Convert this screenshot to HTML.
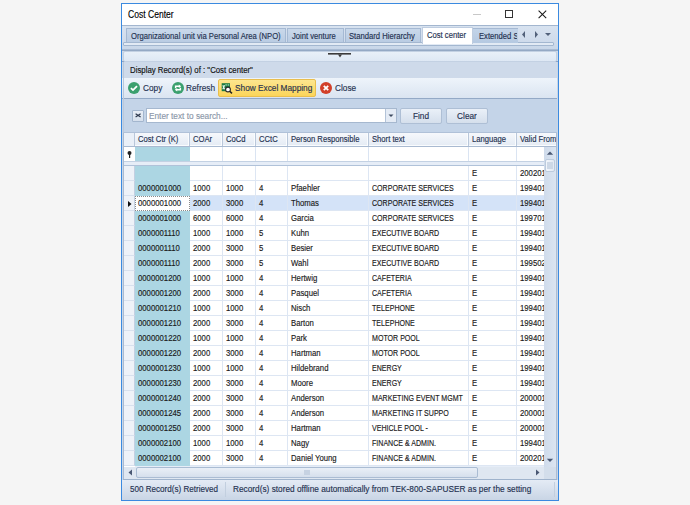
<!DOCTYPE html><html><head><meta charset="utf-8"><style>*{margin:0;padding:0;box-sizing:border-box}
html,body{width:690px;height:505px;overflow:hidden;background:#f5f5f5}
#root{position:relative;width:690px;height:505px;font-family:"Liberation Sans",sans-serif;color:#1e2a3c}
#root>div,#root>svg{position:absolute}
.s{display:inline-block;transform:scaleX(0.9);transform-origin:0 50%;white-space:nowrap;-webkit-text-stroke:0.15px currentColor}
.win{left:121px;top:3px;width:438px;height:498px;border:1px solid #3b8ae0;background:#cad8ea}
.title{left:122px;top:4px;width:436px;height:21px;background:#fff;font-size:10.2px;line-height:22px;padding-left:6px;color:#000}
.title .s{transform:scaleX(0.84)}
.tb-min{left:473px;top:14px;width:8px;height:1px;background:#c8c8c8}
.tb-max{left:505px;top:10px;width:8px;height:8px;border:1px solid #333}
.tb-close{left:537.5px;top:9.5px}
.tabstrip{left:122px;top:25px;width:436px;height:24px;background:linear-gradient(#d8e3f0,#d0dcec 60%,#c9d7e9);border-top:1px solid #a3b6cf}
.tab{top:28px;height:15px;background:linear-gradient(#c9d8ea,#baccE3);border:1px solid #a5b9d3;border-bottom:1px solid #a3b7d0}
.tabt{top:29px;height:15px;line-height:15px;font-size:8.5px;color:#1f3150;white-space:nowrap}
.tabsel{left:422px;top:27px;width:51px;height:17px;background:#fff;border:1px solid #bfcde0;border-bottom:none}
.tabt.sel{top:28px}
.tabext{left:473px;top:28px;width:45px;height:15px;background:linear-gradient(#c3d4e8,#b5c9e1);border-top:1px solid #a5b9d3}
.tabt.ext{width:38px;overflow:hidden}
.tabarrows{left:521px;top:30px}
.tabstripline{left:123px;top:42px;width:431px;height:4px;background:#e2eaf4;border:1px solid #a3b7d0;border-radius:1px}
.split{left:122px;top:49px;width:436px;height:13px;background:#cfdbea;border-top:1px solid #a9bbd3;border-bottom:1px solid #8ca3c2}
.split:before{content:"";position:absolute;left:0;top:0;right:0;height:1px;background:#94a9c5}
.split:after{content:"";position:absolute;left:1px;top:1px;right:1px;height:9px;background:linear-gradient(#e8f0f9,#dee8f4);border:1px solid #c3d1e3;border-radius:2px}
.splitico{left:328px;top:53px}
.lblband{left:122px;top:62px;width:436px;height:16px;background:#cedaea}
.lblband span{position:absolute;left:8px;top:0;line-height:16px;font-size:8.5px;color:#111;transform:scaleX(0.92)}
.toolbar{left:122px;top:78px;width:436px;height:21px;background:linear-gradient(#eef4fb,#dae4f1);border-bottom:1px solid #93a9c6}
.tbt{top:79px;height:18px;line-height:18px;font-size:9.8px;color:#1f3150;white-space:nowrap}
.yellowbtn{left:218px;top:79px;width:98px;height:18px;background:linear-gradient(#fde68f,#fbd55a);border:1px solid #e9be4e;border-radius:2px}
.content{left:122px;top:99px;width:436px;height:33px;background:#c4d4e8}
.xbtn{left:132px;top:110px;width:12px;height:12px;background:linear-gradient(#e8eef7,#d6e0ed);border:1px solid #a3b6ce;border-radius:1px}
.search{left:146px;top:108px;width:251px;height:15px;background:#fff;border:1px solid #a6b8cf}
.search span{position:absolute;left:2px;top:1px;line-height:13px;font-size:9.2px;color:#8a96a8}
.dd{position:absolute;left:238px;top:0;width:11px;height:13px;background:#e4ebf5;border-left:1px solid #b3c3d8}
.btn{top:108px;height:16px;background:linear-gradient(#eaf0f8,#d5dfec);border:1px solid #aebfd5;border-radius:2px;text-align:center;line-height:15px;font-size:9.2px;color:#1f3150}
.btn .s{transform-origin:50% 50%}
.grid{left:124px;top:133px;width:432px;height:346px;background:#fff;overflow:hidden}
.c .s{transform:scaleX(0.86)}
.c .s.u{transform:scaleX(0.785)}
.grid div{position:absolute}
.hdr{left:0;top:0;width:433px;height:14px;background:linear-gradient(#f6f8fc,#e4ebf4);border-bottom:1px solid #a9bad1}
.hdr .ind{left:0;top:0;width:11px;border-right:1px solid #b9c7da;background:#eaf0f8}
.hc{top:0;height:13px;border-right:1px solid #b9c7da;box-shadow:inset -1px -1px 0 #fafcfe;line-height:13px;font-size:8.5px;color:#1f3150;padding-left:3px;white-space:nowrap;overflow:hidden}
.frow{left:0;top:14px;width:433px;height:15px;background:#fff;border-bottom:1px solid #c3d1e3}
.fc{top:0;height:14px;border-right:1px solid #dae4f2}
.fc.blue{background:#acd6e3;border-right-color:#acd6e3}
.fsep{left:0;top:29px;width:433px;height:4px;background:#e6edf7;border-bottom:1px solid #b0c2d9}
.rows{left:0;top:33px;width:420px;height:300px;overflow:hidden}
.rowsend{left:11px;top:333px;width:409px;height:1px;background:#e6edf7}
.pborder{left:123px;top:62px;width:1px;height:70px;background:#b9c8db}
.row{left:0;width:433px;height:15px}
.rind{left:0;top:0;width:11px;height:15px;background:#eef2f8;border-right:1px solid #c3d0e2;border-bottom:1px solid #d8e1ee}
.c{top:0;height:15px;border-right:1px solid #dde6f3;border-bottom:1px solid #dde6f3;line-height:14px;font-size:9px;color:#1a1a1a;padding-left:3px;white-space:nowrap;overflow:hidden}
.c.blue{background:#acd6e3;border-bottom-color:#acd6e3;border-right-color:#acd6e3}
.row.sel .c{background:#d4e3f8}
.row.sel .c.focus{background:#fff;border:1px dotted #8a8a8a;padding-left:2px;line-height:13px}
.vsb{left:420px;top:14px;width:12px;height:320px;background:linear-gradient(90deg,#cfdbeb,#d6e1ef 60%,#dbe5f1)}
.vthumb{left:1px;top:12px;width:10px;height:13px;background:linear-gradient(90deg,#f2f6fb,#e2e9f3);border:1px solid #bccbdd;border-radius:2px}
.vthumb:after{content:'';position:absolute;left:1px;top:2px;width:6px;height:7px;background:#cdd8e6}
.hsb{left:0;top:334px;width:420px;height:12px;background:#dfe7f1}
.hthumb{left:12px;top:0;width:342px;height:11px;background:linear-gradient(#e9eff7,#d5dfec);border:1px solid #aabcd3;border-radius:2px}
.hthumb:after{content:'';position:absolute;left:167px;top:2px;width:6px;height:5px;background:#c6d2e2}
.corner{left:420px;top:334px;width:12px;height:12px;background:#d3deeb}
.status{left:122px;top:480px;width:436px;height:20px;background:linear-gradient(#e4ebf5,#c9d5e5)}
.status span{position:absolute;top:-1px;line-height:20px;font-size:9.8px;color:#1f3150}
.status span{transform:scaleX(0.845)}
.status span.first{transform:scaleX(0.825)}
.ssep{position:absolute;top:2px;width:1px;height:15px;background:#c2cfdf}

.rb{left:556px;top:132px;width:1px;height:348px;background:#adbdd3}
.rb2{left:557px;top:62px;width:1px;height:418px;background:#c9d6e6}
.lb{left:123px;top:132px;width:1px;height:348px;background:#a9bbd2}
.gtop{left:123px;top:132px;width:434px;height:1px;background:#b0c1d8}
.gbot{left:123px;top:479px;width:434px;height:1px;background:#9fb3cc}

.tbt .s{transform:scaleX(0.845)}
</style></head><body><div id="root">
<div class="win"></div>
<div class="title"><span class="s">Cost Center</span></div>
<div class="tb-min"></div><div class="tb-max"></div>
<svg class="tb-close" width="9" height="9" viewBox="0 0 9 9"><path d="M0.6 0.6L8.2 8.2M8.2 0.6L0.6 8.2" stroke="#1a1a1a" stroke-width="1.05"/></svg>
<div class="tabstrip"></div>
<div class="tab" style="left:126px;width:160px"></div><div class="tabt" style="left:131px"><span class="s">Organizational unit via Personal Area (NPO)</span></div>
<div class="tab" style="left:287px;width:57px"></div><div class="tabt" style="left:292px"><span class="s">Joint venture</span></div>
<div class="tab" style="left:345px;width:76px"></div><div class="tabt" style="left:349px"><span class="s">Standard Hierarchy</span></div>
<div class="tabstripline"></div>
<div class="tabsel"></div><div class="tabt sel" style="left:427px"><span class="s">Cost center</span></div>
<div class="tabext"></div><div class="tabt ext" style="left:479px"><span class="s">Extended Standard</span></div>
<svg class="tabarrows" width="34" height="10" viewBox="0 0 34 10"><path d="M4 1L1 4.5L4 8Z" fill="#52617a"/><path d="M14 1L17 4.5L14 8Z" fill="#52617a"/><path d="M24 3H30L27 6Z" fill="#52617a"/></svg>
<div class="split"></div>
<svg class="splitico" width="24" height="6" viewBox="0 0 24 6"><rect x="0" y="0" width="23" height="1.6" fill="#3b3b3b"/><path d="M10 1.5H14L12 4.5Z" fill="#3b3b3b"/></svg>
<div class="lblband"><span class="s">Display Record(s) of : "Cost center"</span></div>
<div class="toolbar"></div>
<svg class="ico" style="left:128px;top:82px" width="12" height="12" viewBox="0 0 12 12"><circle cx="6" cy="6" r="6" fill="#3ba06e"/><path d="M2.9 6.1L5 8.1L9 4.1" stroke="#fff" stroke-width="1.8" fill="none"/></svg>
<div class="tbt" style="left:143px"><span class="s">Copy</span></div>
<svg class="ico" style="left:171.5px;top:81.5px" width="12" height="12" viewBox="0 0 12 12"><circle cx="6" cy="6" r="6" fill="#3ba06e"/><path d="M3.6 6.3V4.3H7.2" stroke="#fff" stroke-width="1.4" fill="none"/><path d="M6.8 2.6L9.2 4.3L6.8 6Z" fill="#fff"/><path d="M8.4 5.7V7.7H4.8" stroke="#fff" stroke-width="1.4" fill="none"/><path d="M5.2 6L2.8 7.7L5.2 9.4Z" fill="#fff"/></svg>
<div class="tbt" style="left:186px"><span class="s">Refresh</span></div>
<div class="yellowbtn"></div>
<svg class="ico" style="left:221px;top:83px" width="12" height="12" viewBox="0 0 12 12"><rect x="0.7" y="0.2" width="8.3" height="8" fill="#1b7a43"/><rect x="4.3" y="1.2" width="1.6" height="1.5" fill="#8cc9a2"/><rect x="6.6" y="1.2" width="1.6" height="1.5" fill="#8cc9a2"/><path d="M1.8 2.2L3.6 6.2M3.6 2.2L1.8 6.2" stroke="#e8f4ec" stroke-width="1.1"/><circle cx="7" cy="6.5" r="2.4" fill="#fff" stroke="#2a2a2a" stroke-width="1.1"/><path d="M8.7 8.2L11 10.4" stroke="#222" stroke-width="1.5"/></svg>
<div class="tbt" style="left:235px"><span class="s">Show Excel Mapping</span></div>
<svg class="ico" style="left:320px;top:82px" width="12" height="12" viewBox="0 0 12 12"><circle cx="6" cy="6" r="6" fill="#d2402a"/><path d="M3.8 3.8L8.2 8.2M8.2 3.8L3.8 8.2" stroke="#fff" stroke-width="1.8"/></svg>
<div class="tbt" style="left:335px"><span class="s">Close</span></div>
<div class="content"></div><div class="pborder"></div>
<div class="xbtn"><svg width="11" height="11" viewBox="0 0 11 11" style="position:absolute;left:0;top:0"><path d="M2.6 2.7L7.6 6.1M7.6 2.7L2.6 6.1" stroke="#2f3a4f" stroke-width="1.2"/></svg></div>
<div class="search"><span class="s">Enter text to search...</span><div class="dd"><svg width="10" height="13" viewBox="0 0 10 13" style="position:absolute;left:0;top:0"><path d="M2.5 5.5H7.5L5 8Z" fill="#3d4a60"/></svg></div></div>
<div class="btn" style="left:400px;width:42px"><span class="s">Find</span></div>
<div class="btn" style="left:446px;width:42px"><span class="s">Clear</span></div>
<div class="grid">
<div class="hdr">
<div class="ind" style="height:13px"></div>
<div class="hc" style="left:11px;width:55px"><span class="s">Cost Ctr (K)</span></div>
<div class="hc" style="left:66px;width:33px"><span class="s">COAr</span></div>
<div class="hc" style="left:99px;width:33px"><span class="s">CoCd</span></div>
<div class="hc" style="left:132px;width:32px"><span class="s">CCtC</span></div>
<div class="hc" style="left:164px;width:81px"><span class="s">Person Responsible</span></div>
<div class="hc" style="left:245px;width:100px"><span class="s">Short text</span></div>
<div class="hc" style="left:345px;width:48px"><span class="s">Language</span></div>
<div class="hc" style="left:393px;width:84px"><span class="s">Valid From</span></div>
</div>
<div class="frow">
<svg style="position:absolute;left:3px;top:4px" width="5" height="7" viewBox="0 0 5 7"><circle cx="2.5" cy="2" r="2" fill="#222"/><rect x="2" y="3" width="1.2" height="4" fill="#222"/></svg>
<div class="fc blue" style="left:11px;width:55px"></div>
<div class="fc" style="left:66px;width:33px"></div>
<div class="fc" style="left:99px;width:33px"></div>
<div class="fc" style="left:132px;width:32px"></div>
<div class="fc" style="left:164px;width:81px"></div>
<div class="fc" style="left:245px;width:100px"></div>
<div class="fc" style="left:345px;width:48px"></div>
<div class="fc" style="left:393px;width:84px"></div>
</div>
<div class="fsep"></div>
<div class="rows">
<div class="row" style="top:0px">
<div class="rind"></div>
<div class="c blue" style="left:11px;width:55px"><span class="s"></span></div>
<div class="c" style="left:66px;width:33px"><span class="s"></span></div>
<div class="c" style="left:99px;width:33px"><span class="s"></span></div>
<div class="c" style="left:132px;width:32px"><span class="s"></span></div>
<div class="c" style="left:164px;width:81px"><span class="s"></span></div>
<div class="c" style="left:245px;width:100px"><span class="s"></span></div>
<div class="c" style="left:345px;width:48px"><span class="s">E</span></div>
<div class="c" style="left:393px;width:84px"><span class="s">200201</span></div>
</div>
<div class="row" style="top:15px">
<div class="rind"></div>
<div class="c blue" style="left:11px;width:55px"><span class="s">0000001000</span></div>
<div class="c" style="left:66px;width:33px"><span class="s">1000</span></div>
<div class="c" style="left:99px;width:33px"><span class="s">1000</span></div>
<div class="c" style="left:132px;width:32px"><span class="s">4</span></div>
<div class="c" style="left:164px;width:81px"><span class="s">Pfaehler</span></div>
<div class="c" style="left:245px;width:100px"><span class="s u">CORPORATE SERVICES</span></div>
<div class="c" style="left:345px;width:48px"><span class="s">E</span></div>
<div class="c" style="left:393px;width:84px"><span class="s">199401</span></div>
</div>
<div class="row sel" style="top:30px">
<div class="rind"><svg width="4" height="6" viewBox="0 0 4 6" style="position:absolute;left:4px;top:5px"><path d="M0 0L3.5 3L0 6Z" fill="#111"/></svg></div>
<div class="c focus" style="left:11px;width:55px"><span class="s">0000001000</span></div>
<div class="c" style="left:66px;width:33px"><span class="s">2000</span></div>
<div class="c" style="left:99px;width:33px"><span class="s">3000</span></div>
<div class="c" style="left:132px;width:32px"><span class="s">4</span></div>
<div class="c" style="left:164px;width:81px"><span class="s">Thomas</span></div>
<div class="c" style="left:245px;width:100px"><span class="s u">CORPORATE SERVICES</span></div>
<div class="c" style="left:345px;width:48px"><span class="s">E</span></div>
<div class="c" style="left:393px;width:84px"><span class="s">199401</span></div>
</div>
<div class="row" style="top:45px">
<div class="rind"></div>
<div class="c blue" style="left:11px;width:55px"><span class="s">0000001000</span></div>
<div class="c" style="left:66px;width:33px"><span class="s">6000</span></div>
<div class="c" style="left:99px;width:33px"><span class="s">6000</span></div>
<div class="c" style="left:132px;width:32px"><span class="s">4</span></div>
<div class="c" style="left:164px;width:81px"><span class="s">Garcia</span></div>
<div class="c" style="left:245px;width:100px"><span class="s u">CORPORATE SERVICES</span></div>
<div class="c" style="left:345px;width:48px"><span class="s">E</span></div>
<div class="c" style="left:393px;width:84px"><span class="s">199701</span></div>
</div>
<div class="row" style="top:60px">
<div class="rind"></div>
<div class="c blue" style="left:11px;width:55px"><span class="s">0000001110</span></div>
<div class="c" style="left:66px;width:33px"><span class="s">1000</span></div>
<div class="c" style="left:99px;width:33px"><span class="s">1000</span></div>
<div class="c" style="left:132px;width:32px"><span class="s">5</span></div>
<div class="c" style="left:164px;width:81px"><span class="s">Kuhn</span></div>
<div class="c" style="left:245px;width:100px"><span class="s u">EXECUTIVE BOARD</span></div>
<div class="c" style="left:345px;width:48px"><span class="s">E</span></div>
<div class="c" style="left:393px;width:84px"><span class="s">199401</span></div>
</div>
<div class="row" style="top:75px">
<div class="rind"></div>
<div class="c blue" style="left:11px;width:55px"><span class="s">0000001110</span></div>
<div class="c" style="left:66px;width:33px"><span class="s">2000</span></div>
<div class="c" style="left:99px;width:33px"><span class="s">3000</span></div>
<div class="c" style="left:132px;width:32px"><span class="s">5</span></div>
<div class="c" style="left:164px;width:81px"><span class="s">Besier</span></div>
<div class="c" style="left:245px;width:100px"><span class="s u">EXECUTIVE BOARD</span></div>
<div class="c" style="left:345px;width:48px"><span class="s">E</span></div>
<div class="c" style="left:393px;width:84px"><span class="s">199401</span></div>
</div>
<div class="row" style="top:90px">
<div class="rind"></div>
<div class="c blue" style="left:11px;width:55px"><span class="s">0000001110</span></div>
<div class="c" style="left:66px;width:33px"><span class="s">2000</span></div>
<div class="c" style="left:99px;width:33px"><span class="s">3000</span></div>
<div class="c" style="left:132px;width:32px"><span class="s">5</span></div>
<div class="c" style="left:164px;width:81px"><span class="s">Wahl</span></div>
<div class="c" style="left:245px;width:100px"><span class="s u">EXECUTIVE BOARD</span></div>
<div class="c" style="left:345px;width:48px"><span class="s">E</span></div>
<div class="c" style="left:393px;width:84px"><span class="s">199502</span></div>
</div>
<div class="row" style="top:105px">
<div class="rind"></div>
<div class="c blue" style="left:11px;width:55px"><span class="s">0000001200</span></div>
<div class="c" style="left:66px;width:33px"><span class="s">1000</span></div>
<div class="c" style="left:99px;width:33px"><span class="s">1000</span></div>
<div class="c" style="left:132px;width:32px"><span class="s">4</span></div>
<div class="c" style="left:164px;width:81px"><span class="s">Hertwig</span></div>
<div class="c" style="left:245px;width:100px"><span class="s u">CAFETERIA</span></div>
<div class="c" style="left:345px;width:48px"><span class="s">E</span></div>
<div class="c" style="left:393px;width:84px"><span class="s">199401</span></div>
</div>
<div class="row" style="top:120px">
<div class="rind"></div>
<div class="c blue" style="left:11px;width:55px"><span class="s">0000001200</span></div>
<div class="c" style="left:66px;width:33px"><span class="s">2000</span></div>
<div class="c" style="left:99px;width:33px"><span class="s">3000</span></div>
<div class="c" style="left:132px;width:32px"><span class="s">4</span></div>
<div class="c" style="left:164px;width:81px"><span class="s">Pasquel</span></div>
<div class="c" style="left:245px;width:100px"><span class="s u">CAFETERIA</span></div>
<div class="c" style="left:345px;width:48px"><span class="s">E</span></div>
<div class="c" style="left:393px;width:84px"><span class="s">199401</span></div>
</div>
<div class="row" style="top:135px">
<div class="rind"></div>
<div class="c blue" style="left:11px;width:55px"><span class="s">0000001210</span></div>
<div class="c" style="left:66px;width:33px"><span class="s">1000</span></div>
<div class="c" style="left:99px;width:33px"><span class="s">1000</span></div>
<div class="c" style="left:132px;width:32px"><span class="s">4</span></div>
<div class="c" style="left:164px;width:81px"><span class="s">Nisch</span></div>
<div class="c" style="left:245px;width:100px"><span class="s u">TELEPHONE</span></div>
<div class="c" style="left:345px;width:48px"><span class="s">E</span></div>
<div class="c" style="left:393px;width:84px"><span class="s">199401</span></div>
</div>
<div class="row" style="top:150px">
<div class="rind"></div>
<div class="c blue" style="left:11px;width:55px"><span class="s">0000001210</span></div>
<div class="c" style="left:66px;width:33px"><span class="s">2000</span></div>
<div class="c" style="left:99px;width:33px"><span class="s">3000</span></div>
<div class="c" style="left:132px;width:32px"><span class="s">4</span></div>
<div class="c" style="left:164px;width:81px"><span class="s">Barton</span></div>
<div class="c" style="left:245px;width:100px"><span class="s u">TELEPHONE</span></div>
<div class="c" style="left:345px;width:48px"><span class="s">E</span></div>
<div class="c" style="left:393px;width:84px"><span class="s">199401</span></div>
</div>
<div class="row" style="top:165px">
<div class="rind"></div>
<div class="c blue" style="left:11px;width:55px"><span class="s">0000001220</span></div>
<div class="c" style="left:66px;width:33px"><span class="s">1000</span></div>
<div class="c" style="left:99px;width:33px"><span class="s">1000</span></div>
<div class="c" style="left:132px;width:32px"><span class="s">4</span></div>
<div class="c" style="left:164px;width:81px"><span class="s">Park</span></div>
<div class="c" style="left:245px;width:100px"><span class="s u">MOTOR POOL</span></div>
<div class="c" style="left:345px;width:48px"><span class="s">E</span></div>
<div class="c" style="left:393px;width:84px"><span class="s">199401</span></div>
</div>
<div class="row" style="top:180px">
<div class="rind"></div>
<div class="c blue" style="left:11px;width:55px"><span class="s">0000001220</span></div>
<div class="c" style="left:66px;width:33px"><span class="s">2000</span></div>
<div class="c" style="left:99px;width:33px"><span class="s">3000</span></div>
<div class="c" style="left:132px;width:32px"><span class="s">4</span></div>
<div class="c" style="left:164px;width:81px"><span class="s">Hartman</span></div>
<div class="c" style="left:245px;width:100px"><span class="s u">MOTOR POOL</span></div>
<div class="c" style="left:345px;width:48px"><span class="s">E</span></div>
<div class="c" style="left:393px;width:84px"><span class="s">199401</span></div>
</div>
<div class="row" style="top:195px">
<div class="rind"></div>
<div class="c blue" style="left:11px;width:55px"><span class="s">0000001230</span></div>
<div class="c" style="left:66px;width:33px"><span class="s">1000</span></div>
<div class="c" style="left:99px;width:33px"><span class="s">1000</span></div>
<div class="c" style="left:132px;width:32px"><span class="s">4</span></div>
<div class="c" style="left:164px;width:81px"><span class="s">Hildebrand</span></div>
<div class="c" style="left:245px;width:100px"><span class="s u">ENERGY</span></div>
<div class="c" style="left:345px;width:48px"><span class="s">E</span></div>
<div class="c" style="left:393px;width:84px"><span class="s">199401</span></div>
</div>
<div class="row" style="top:210px">
<div class="rind"></div>
<div class="c blue" style="left:11px;width:55px"><span class="s">0000001230</span></div>
<div class="c" style="left:66px;width:33px"><span class="s">2000</span></div>
<div class="c" style="left:99px;width:33px"><span class="s">3000</span></div>
<div class="c" style="left:132px;width:32px"><span class="s">4</span></div>
<div class="c" style="left:164px;width:81px"><span class="s">Moore</span></div>
<div class="c" style="left:245px;width:100px"><span class="s u">ENERGY</span></div>
<div class="c" style="left:345px;width:48px"><span class="s">E</span></div>
<div class="c" style="left:393px;width:84px"><span class="s">199401</span></div>
</div>
<div class="row" style="top:225px">
<div class="rind"></div>
<div class="c blue" style="left:11px;width:55px"><span class="s">0000001240</span></div>
<div class="c" style="left:66px;width:33px"><span class="s">2000</span></div>
<div class="c" style="left:99px;width:33px"><span class="s">3000</span></div>
<div class="c" style="left:132px;width:32px"><span class="s">4</span></div>
<div class="c" style="left:164px;width:81px"><span class="s">Anderson</span></div>
<div class="c" style="left:245px;width:100px"><span class="s u">MARKETING EVENT MGMT</span></div>
<div class="c" style="left:345px;width:48px"><span class="s">E</span></div>
<div class="c" style="left:393px;width:84px"><span class="s">200001</span></div>
</div>
<div class="row" style="top:240px">
<div class="rind"></div>
<div class="c blue" style="left:11px;width:55px"><span class="s">0000001245</span></div>
<div class="c" style="left:66px;width:33px"><span class="s">2000</span></div>
<div class="c" style="left:99px;width:33px"><span class="s">3000</span></div>
<div class="c" style="left:132px;width:32px"><span class="s">4</span></div>
<div class="c" style="left:164px;width:81px"><span class="s">Anderson</span></div>
<div class="c" style="left:245px;width:100px"><span class="s u">MARKETING IT SUPPO</span></div>
<div class="c" style="left:345px;width:48px"><span class="s">E</span></div>
<div class="c" style="left:393px;width:84px"><span class="s">200001</span></div>
</div>
<div class="row" style="top:255px">
<div class="rind"></div>
<div class="c blue" style="left:11px;width:55px"><span class="s">0000001250</span></div>
<div class="c" style="left:66px;width:33px"><span class="s">2000</span></div>
<div class="c" style="left:99px;width:33px"><span class="s">3000</span></div>
<div class="c" style="left:132px;width:32px"><span class="s">4</span></div>
<div class="c" style="left:164px;width:81px"><span class="s">Hartman</span></div>
<div class="c" style="left:245px;width:100px"><span class="s u">VEHICLE POOL -</span></div>
<div class="c" style="left:345px;width:48px"><span class="s">E</span></div>
<div class="c" style="left:393px;width:84px"><span class="s">200001</span></div>
</div>
<div class="row" style="top:270px">
<div class="rind"></div>
<div class="c blue" style="left:11px;width:55px"><span class="s">0000002100</span></div>
<div class="c" style="left:66px;width:33px"><span class="s">1000</span></div>
<div class="c" style="left:99px;width:33px"><span class="s">1000</span></div>
<div class="c" style="left:132px;width:32px"><span class="s">4</span></div>
<div class="c" style="left:164px;width:81px"><span class="s">Nagy</span></div>
<div class="c" style="left:245px;width:100px"><span class="s u">FINANCE &amp; ADMIN.</span></div>
<div class="c" style="left:345px;width:48px"><span class="s">E</span></div>
<div class="c" style="left:393px;width:84px"><span class="s">199401</span></div>
</div>
<div class="row" style="top:285px">
<div class="rind"></div>
<div class="c blue" style="left:11px;width:55px"><span class="s">0000002100</span></div>
<div class="c" style="left:66px;width:33px"><span class="s">2000</span></div>
<div class="c" style="left:99px;width:33px"><span class="s">3000</span></div>
<div class="c" style="left:132px;width:32px"><span class="s">4</span></div>
<div class="c" style="left:164px;width:81px"><span class="s">Daniel Young</span></div>
<div class="c" style="left:245px;width:100px"><span class="s u">FINANCE &amp; ADMIN.</span></div>
<div class="c" style="left:345px;width:48px"><span class="s">E</span></div>
<div class="c" style="left:393px;width:84px"><span class="s">200201</span></div>
</div>
</div>
<div class="rowsend"></div>
<div class="vsb"><svg width="12" height="320" viewBox="0 0 12 320" style="position:absolute;left:0;top:0"><path d="M2.8 7.8H9.2L6 4.6Z" fill="#4a5873"/><path d="M2.8 311.8H9.2L6 315Z" fill="#4a5873"/></svg><div class="vthumb"></div></div>
<div class="hsb"><svg width="420" height="12" viewBox="0 0 420 12" style="position:absolute;left:0;top:0"><path d="M8 2.5V8.5L4.5 5.5Z" fill="#4a5873"/><path d="M412 2.5V8.5L415.5 5.5Z" fill="#4a5873"/></svg><div class="hthumb"></div></div>
<div class="corner"></div>
</div>
<div class="rb"></div><div class="rb2"></div><div class="lb"></div><div class="gtop"></div><div class="gbot"></div>
<div class="status"><span class="st s first" style="left:8px">500 Record(s) Retrieved</span><div class="ssep" style="left:103px"></div><span class="st s" style="left:111px">Record(s) stored offline automatically from TEK-800-SAPUSER as per the setting</span><div class="ssep" style="left:432px"></div></div>
</div></body></html>
